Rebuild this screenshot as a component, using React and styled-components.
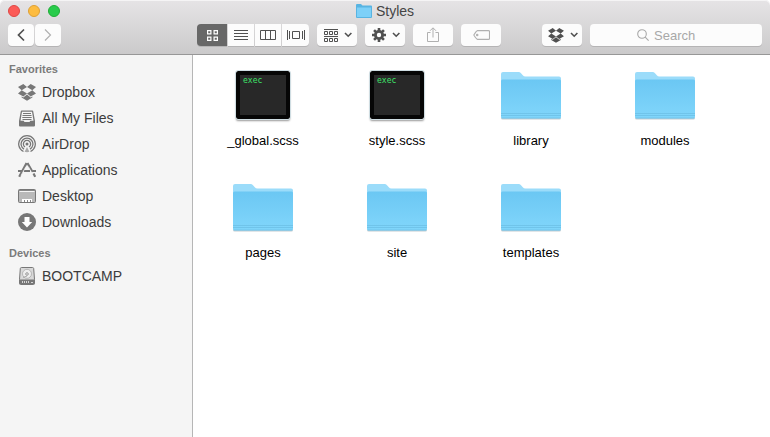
import React from "react";
import styled, { createGlobalStyle } from "styled-components";

const GlobalStyle = createGlobalStyle`
  * { box-sizing: border-box; }
  body {
    margin: 0;
    background: #fff;
    font-family: "Liberation Sans", Arial, sans-serif;
  }
  button, input { font: inherit; }
`;

const Window = styled.div`
  display: flex;
  flex-direction: column;
  min-height: 100vh;
`;

const Header = styled.header`
  background: linear-gradient(#e6e4e6, #cbcacb);
  border-bottom: 1px solid #979797;
  border-radius: 5px 5px 0 0;
  box-shadow: inset 0 1px 0 #f5f4f5;
  padding-bottom: 8px;
`;

const TitleBar = styled.div`
  display: grid;
  grid-template-columns: 1fr auto 1fr;
  align-items: center;
  height: 24px;
  padding: 0 8px 2px;
`;

const Lights = styled.div`
  display: flex;
  gap: 8px;
`;

const Light = styled.button`
  width: 12px;
  height: 12px;
  padding: 0;
  border: 1px solid ${(p) => p.$edge};
  border-radius: 50%;
  background: ${(p) => p.$fill};
`;

const Title = styled.h1`
  display: flex;
  align-items: center;
  gap: 4px;
  margin: 0;
  font-size: 14px;
  font-weight: 400;
  line-height: 22px;
  color: #454545;
`;

const Toolbar = styled.div`
  display: flex;
  gap: 8px;
  padding: 0 8px;
`;

const Group = styled.div`
  display: flex;
  gap: 1px;
  margin-right: ${(p) => p.$after || 0}px;
`;

const ToolButton = styled.button`
  display: flex;
  align-items: center;
  justify-content: center;
  gap: 6px;
  flex: none;
  width: ${(p) => p.$width || 40}px;
  height: 22px;
  padding: 0 0 0 ${(p) => (p.$menu ? 2 : 0)}px;
  border: 0;
  border-radius: 4px;
  background: ${(p) => (p.$active ? "#686868" : "#fcfcfc")};
  color: ${(p) => (p.$active ? "#fff" : p.$faint ? "#b0b0b0" : "#505050")};
  box-shadow: 0 1px 0 #b5b4b5;

  ${Group} > &:not(:last-child) {
    border-top-right-radius: ${(p) => (p.$joined ? 0 : 4)}px;
    border-bottom-right-radius: ${(p) => (p.$joined ? 0 : 4)}px;
  }
  ${Group} > &:not(:first-child) {
    border-top-left-radius: ${(p) => (p.$joined ? 0 : 4)}px;
    border-bottom-left-radius: ${(p) => (p.$joined ? 0 : 4)}px;
  }
`;

const Search = styled.label`
  display: flex;
  flex: 1;
  align-items: center;
  justify-content: center;
  gap: 5px;
  height: 22px;
  min-width: 90px;
  border-radius: 4px;
  background: #fcfcfc;
  box-shadow: 0 1px 0 #b5b4b5;
  color: #a8a8a8;
`;

const SearchInput = styled.input`
  width: 61px;
  height: 20px;
  padding: 0;
  border: 0;
  outline: 0;
  background: transparent;
  color: #333;
  font-size: 13px;
  &::placeholder { color: #a8a8a8; opacity: 1; }
`;

const Body = styled.div`
  display: flex;
  flex: 1;
`;

const Sidebar = styled.nav`
  flex: none;
  width: 193px;
  padding-top: 5px;
  background: #f5f5f5;
  border-right: 1px solid #b6b6b6;
`;

const SectionTitle = styled.h2`
  margin: 0 0 1px;
  padding-left: 9px;
  font-size: 11px;
  font-weight: 700;
  line-height: 18px;
  color: #7b7b7b;
`;

const PlaceList = styled.ul`
  margin: 0 0 9px;
  padding: 0;
  list-style: none;
`;

const Place = styled.a`
  display: flex;
  align-items: center;
  gap: 6px;
  height: 26px;
  padding-left: 18px;
  font-size: 14px;
  color: #3c3c3c;
  text-decoration: none;
  svg { color: #777; }
`;

const Files = styled.main`
  flex: 1;
  display: grid;
  grid-template-columns: repeat(auto-fill, 134px);
  grid-auto-rows: 112px;
  align-content: start;
  padding: 12px 0 0 3px;
`;

const File = styled.button`
  display: flex;
  flex-direction: column;
  align-items: center;
  gap: 8px;
  padding: 0;
  border: 0;
  background: transparent;
  font-size: 13px;
  line-height: 20px;
  color: #000;
`;

const Screen = styled.span`
  display: flex;
  align-items: center;
  justify-content: center;
  height: 56px;
`;

const Terminal = styled.span`
  width: 54px;
  height: 48px;
  padding: 0 3px;
  border: 4px solid #060606;
  border-radius: 2px;
  outline: 1px solid #cfdde2;
  background: #282828;
  box-shadow: 0 2px 2px #999;
  color: #3ee468;
  font-family: "DejaVu Sans Mono", monospace;
  font-size: 8px;
  line-height: 11px;
  text-align: left;
`;

function Icon({ w, h, children, ...rest }) {
  return (
    <svg width={w} height={h} viewBox={`0 0 ${w} ${h}`} fill="none" stroke="currentColor" aria-hidden="true" {...rest}>
      {children}
    </svg>
  );
}

const Chevron = () => (
  <Icon w={8} h={6} strokeWidth="1.6"><path d="M1 1l3.200 3.200L7.400 1" /></Icon>
);

const BackIcon = () => <Icon w={8} h={14} strokeWidth="1.7"><path d="M7 1.5L1.5 7 7 12.5" /></Icon>;
const ForwardIcon = () => <Icon w={8} h={14} strokeWidth="1.2"><path d="M1 1.5L6.500 7 1 12.5" /></Icon>;

const GridIcon = () => (
  <Icon w={11} h={11} strokeWidth="1.2">
    <path d="M.6.6h3.3v3.3H.6zM7.1.6h3.3v3.3H7.1zM.6 7.1h3.3v3.3H.6zM7.1 7.1h3.3v3.3H7.1z" />
  </Icon>
);
const ListIcon = () => <Icon w={14} h={10}><path d="M0 .5h14M0 3.5h14M0 6.5h14M0 9.5h14" /></Icon>;
const ColumnsIcon = () => (
  <Icon w={16} h={10}><path d="M.5.5h15v9H.5zM5.5.5v9M10.5.5v9" /></Icon>
);
const CoverIcon = () => (
  <Icon w={18} h={10}><path d="M.5 0v10M2.5 1v8M5.5 1.5h7v7h-7zM15.5 1v8M17.5 0v10" /></Icon>
);
const ArrangeIcon = () => (
  <Icon w={14} h={13}>
    <path d="M0 .5h14M0 7.5h14M.5 2.5h3v3h-3zM5.5 2.5h3v3h-3zM10.5 2.5h3v3h-3zM.5 9.5h3v3h-3zM5.5 9.5h3v3h-3zM10.5 9.5h3v3h-3z" />
  </Icon>
);
const GearIcon = () => (
  <Icon w={14} h={14}>
    <circle cx="7" cy="7" r="3.6" strokeWidth="2.8" />
    <path strokeWidth="2.6" d="M7 0v3M7 11v3M0 7h3M11 7h3M2.05 2.05l2 2M9.95 9.95l2 2M2.05 11.95l2-2M9.95 4.05l2-2" />
  </Icon>
);
const ShareIcon = () => (
  <Icon w={12} h={16}><path d="M3.5 5.5h-3v9h11v-9h-3M6 10.5V1M3 3.8l3-3 3 3" /></Icon>
);
const TagIcon = () => (
  <Icon w={17} h={10} strokeWidth="1.1">
    <path d="M4.5.6h11q1 0 1 1v6.8q0 1-1 1h-11Q3.4 9.2.8 5 3.4.8 4.5.6z" />
    <circle cx="4.2" cy="5" r=".7" />
  </Icon>
);
const SearchIcon = () => (
  <Icon w={12} h={12} strokeWidth="1.1"><circle cx="5" cy="5" r="4.3" /><path d="M8.2 8.2l3.4 3.4" /></Icon>
);
const DropboxIcon = ({ w = 18, h = 17 }) => (
  <svg width={w} height={h} viewBox="0 0 18 17" fill="currentColor" aria-hidden="true">
    <path d="M0 3L5.3.1 9 3.1 3.7 6.3zM18 3L12.7.1 9 3.1l5.3 3.2zM0 9.4l3.7-3.1L9 9.6l-3.7 3zM18 9.4l-3.7-3.1L9 9.6l3.7 3zM9 10.4l3.7 3 1.7-1v1.2L9 16.8l-5.4-3.2v-1.2l1.7 1z" />
  </svg>
);
const AllFilesIcon = () => (
  <Icon w={18} h={17} stroke="none">
    <path fill="#777" d="M3.6.5h10.8q.7 0 .8.7L17 11v4.5q0 1-1 1H2q-1 0-1-1V11L2.8 1.2q.1-.7.8-.7z" />
    <path fill="#f5f5f5" d="M4 1.7h10l1.5 9.1h-3.2L11.500 12h-5l-.8-1.200H2.500z" />
    <path stroke="#777" d="M5 3.5h8M4.500 5.5h9M4.300 7.500h9.400M4.500 9.500h9" />
  </Icon>
);
const AirDropIcon = () => (
  <Icon w={18} h={18} strokeWidth="1.3">
    <path d="M5.500 16.500a8.300 8.300 0 1 1 7 0M6 14.100a5.900 5.900 0 1 1 6 0M7 12a3.600 3.600 0 1 1 4 0" />
    <circle cx="9" cy="9" r="1.500" fill="currentColor" stroke="none" />
    <path fill="currentColor" stroke="none" d="M9 12l2.400 4.800q-2.400.8-4.800 0z" opacity=".6" />
  </Icon>
);
const AppsIcon = () => (
  <Icon w={18} h={16}>
    <path strokeWidth="2.2" d="M9.400 1l5.200 9M15.500 11.500l1.700 3.300M8.600 1L1.200 14.800" />
    <path strokeWidth="2" d="M0 9h4M6 9h6M14.500 9H18" />
    <path stroke="#f5f5f5" strokeWidth=".7" d="M8 4.500L3 13.500M10.300 4.500l4 7.500" />
  </Icon>
);
const DesktopIcon = () => (
  <Icon w={18} h={14}>
    <rect x=".5" y=".5" width="17" height="13" rx="1" fill="#b9b9b9" />
    <path stroke="#f5f5f5" d="M1.5 2.5h15" />
    <path stroke="#888" d="M1 1.5h16" />
    <path fill="#fff" stroke="none" d="M4 10h10v3H4z" />
    <path stroke="#888" d="M6.5 11v2M9.5 11v2M12.5 11v2" />
  </Icon>
);
const DownloadsIcon = () => (
  <Icon w={18} h={18} stroke="none">
    <circle cx="9" cy="9" r="9" fill="#777" />
    <path fill="#fff" d="M6.500 4h5v5h2.700L9 14.500 3.800 9h2.700z" />
  </Icon>
);
const DiskIcon = () => (
  <Icon w={18} h={18}>
    <path fill="#d9d9d9" d="M3.5.5h11q1 0 1.200 1l.8 11v4q0 1-1 1h-13q-1 0-1-1v-4l.8-11q.2-1 1.200-1z" />
    <path fill="#777" stroke="none" d="M1.5 12.5h15V17h-15z" />
    <circle cx="9" cy="6.8" r="4.5" fill="#eee" stroke="#aaa" strokeWidth=".8" />
    <circle cx="9" cy="7" r="1.3" stroke="#999" />
    <path stroke="#aaa" d="M5 10.500l4-1.500" />
    <path stroke="#eee" d="M4.500 14v2M6.500 14v2M8.500 14v2M10.500 14v2M13 15.500h2" strokeWidth=".8" />
  </Icon>
);

const MiniFolder = () => (
  <Icon w={16} h={14} stroke="none">
    <path fill="#58b4e2" d="M0 1q0-1 1-1h4l1.5 1.5H15q1 0 1 1V13q0 1-1 1H1q-1 0-1-1z" />
    <path fill="#7dd0f8" d="M1 3.5h14V13H1z" />
  </Icon>
);

const FolderIcon = () => (
  <svg width="64" height="52" viewBox="0 0 64 52" aria-hidden="true">
    <defs>
      <linearGradient id="folder" x1="0" y1="0" x2="0" y2="1">
        <stop offset="0" stopColor="#6bc7f3" />
        <stop offset="1" stopColor="#81d6fb" />
      </linearGradient>
    </defs>
    <path fill="#c4ccd0" d="M2 45h60v4q0 1.500-1.500 1.500h-57Q2 50.500 2 49z" />
    <path fill="#9bdcfa" d="M2 5q0-2 2-2h15.500q1.500 0 2.500 1.200l1.800 2q.9 1.300 2.700 1.300H60q2 0 2 2V21H2z" />
    <path fill="url(#folder)" d="M2 12q0-1.500 1.500-1.500h57Q62 10.500 62 12v36q0 1.500-1.500 1.500h-57Q2 49.500 2 48z" />
    <path stroke="#63b5dc" d="M2 44.500h60M2 46.500h60M3 49h58" opacity=".5" />
  </svg>
);

const views = [
  ["Icon view", GridIcon, 30],
  ["List view", ListIcon, 26],
  ["Column view", ColumnsIcon, 26],
  ["Cover flow", CoverIcon, 27],
];

const favorites = [
  ["Dropbox", DropboxIcon],
  ["All My Files", AllFilesIcon],
  ["AirDrop", AirDropIcon],
  ["Applications", AppsIcon],
  ["Desktop", DesktopIcon],
  ["Downloads", DownloadsIcon],
];

const devices = [["BOOTCAMP", DiskIcon]];

const files = ["_global.scss", "style.scss", "library", "modules", "pages", "site", "templates"];

function Places({ title, items }) {
  return (
    <section>
      <SectionTitle>{title}</SectionTitle>
      <PlaceList>
        {items.map(([name, Glyph]) => (
          <li key={name}>
            <Place href="#"><Glyph />{name}</Place>
          </li>
        ))}
      </PlaceList>
    </section>
  );
}

export default function App() {
  return (
    <Window>
      <GlobalStyle />
      <Header>
        <TitleBar>
          <Lights>
            <Light aria-label="Close" $fill="#fc5b57" $edge="#df4744" />
            <Light aria-label="Minimize" $fill="#fdbc40" $edge="#dea034" />
            <Light aria-label="Zoom" $fill="#28cb4b" $edge="#1fad36" />
          </Lights>
          <Title><MiniFolder />Styles</Title>
        </TitleBar>
        <Toolbar>
          <Group $after={128}>
            <ToolButton $width={26} aria-label="Back"><BackIcon /></ToolButton>
            <ToolButton $width={26} $faint aria-label="Forward"><ForwardIcon /></ToolButton>
          </Group>
          <Group>
            {views.map(([name, Glyph, width], i) => (
              <ToolButton key={name} $joined $width={width} $active={i === 0} aria-label={name}>
                <Glyph />
              </ToolButton>
            ))}
          </Group>
          <ToolButton $menu aria-label="Arrange"><ArrangeIcon /><Chevron /></ToolButton>
          <ToolButton $menu aria-label="Actions"><GearIcon /><Chevron /></ToolButton>
          <ToolButton $faint aria-label="Share"><ShareIcon /></ToolButton>
          <Group $after={33}>
            <ToolButton $faint aria-label="Edit tags"><TagIcon /></ToolButton>
          </Group>
          <ToolButton $menu aria-label="Dropbox"><DropboxIcon w={16} h={15} /><Chevron /></ToolButton>
          <Search>
            <SearchIcon />
            <SearchInput type="text" placeholder="Search" aria-label="Search" />
          </Search>
        </Toolbar>
      </Header>
      <Body>
        <Sidebar>
          <Places title="Favorites" items={favorites} />
          <Places title="Devices" items={devices} />
        </Sidebar>
        <Files>
          {files.map((name) => (
            <File key={name}>
              <Screen>{name.endsWith(".scss") ? <Terminal>exec</Terminal> : <FolderIcon />}</Screen>
              {name}
            </File>
          ))}
        </Files>
      </Body>
    </Window>
  );
}
